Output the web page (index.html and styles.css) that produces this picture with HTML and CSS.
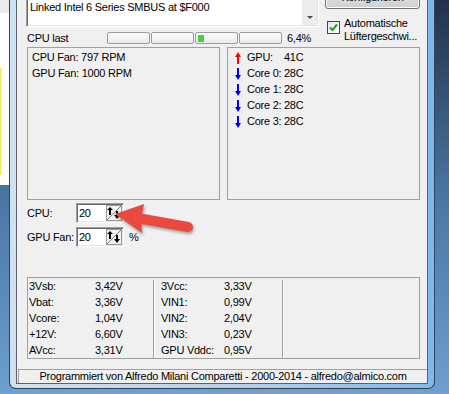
FILE: index.html
```html
<!DOCTYPE html>
<html lang="de">
<head>
    <meta charset="UTF-8">
    <title>SpeedFan</title>
    <link rel="stylesheet" href="styles.css">
</head>
<body>
    <div class="desk">
        <div class="side">
            <div class="side-top"><div class="note-mark"></div></div>
        </div>
        <div class="frame">
            <div class="client">
                <div class="head">
                    <div class="head-main">
                        <div class="memo">
                            <div class="memo-text">Linked Intel 6 Series SMBUS at $F000</div>
                            <div class="memo-scroll"><span class="scroll-arrow"></span></div>
                        </div>
                        <div class="load-row">
                            <span class="load-label">CPU last</span>
                            <div class="load-bars">
                                <div class="bar"></div>
                                <div class="bar"></div>
                                <div class="bar"><div class="bar-fill"></div></div>
                                <div class="bar"></div>
                            </div>
                            <span class="load-value">6,4%</span>
                        </div>
                    </div>
                    <div class="head-side">
                        <button class="btn">Konfigurieren</button>
                        <div class="check">
                            <span class="check-box">
                                <svg width="11" height="11" viewBox="0 0 11 11"><path d="M2 5.5 L4.5 8 L9 2.5" fill="none" stroke="#1f9e1f" stroke-width="2"/></svg>
                            </span>
                            <span class="check-text">Automatische<br>Lüftergeschwi...</span>
                        </div>
                    </div>
                </div>

                <div class="panels">
                    <div class="panel fans">
                        <div>CPU Fan: 797 RPM</div>
                        <div>GPU Fan: 1000 RPM</div>
                    </div>
                    <div class="panel temps">
                        <div class="temp">
                            <svg class="arrow" viewBox="0 0 6 12"><path d="M3 0 L6 5 H4 V12 H2 V5 H0 Z" fill="#f00"/></svg>
                            <span class="temp-name">GPU:</span><span>41C</span>
                        </div>
                        <div class="temp">
                            <svg class="arrow" viewBox="0 0 6 12"><path d="M2 0 H4 V7 H6 L3 12 L0 7 H2 Z" fill="#00f"/></svg>
                            <span class="temp-name">Core 0:</span><span>28C</span>
                        </div>
                        <div class="temp">
                            <svg class="arrow" viewBox="0 0 6 12"><path d="M2 0 H4 V7 H6 L3 12 L0 7 H2 Z" fill="#00f"/></svg>
                            <span class="temp-name">Core 1:</span><span>28C</span>
                        </div>
                        <div class="temp">
                            <svg class="arrow" viewBox="0 0 6 12"><path d="M2 0 H4 V7 H6 L3 12 L0 7 H2 Z" fill="#00f"/></svg>
                            <span class="temp-name">Core 2:</span><span>28C</span>
                        </div>
                        <div class="temp">
                            <svg class="arrow" viewBox="0 0 6 12"><path d="M2 0 H4 V7 H6 L3 12 L0 7 H2 Z" fill="#00f"/></svg>
                            <span class="temp-name">Core 3:</span><span>28C</span>
                        </div>
                    </div>
                </div>

                <div class="speed">
                    <span class="speed-label">CPU:</span>
                    <div class="edit">
                        <span class="edit-value">20</span>
                        <svg class="spin" width="16" height="16" viewBox="0 0 16 16">
                            <rect x="0.5" y="0.5" width="15" height="15" fill="#f0f0f0" stroke="#9a9a9a"/>
                            <path d="M1 15 L15 1" stroke="#7a7a7a"/>
                            <path d="M4 2 L7 5 H5 V10 H3 V5 H1 Z" fill="#000"/>
                            <path d="M10 6 H12 V10 H14 L11 14 L8 10 H10 Z" fill="#000"/>
                        </svg>
                    </div>
                </div>
                <div class="speed">
                    <span class="speed-label">GPU Fan:</span>
                    <div class="edit">
                        <span class="edit-value">20</span>
                        <svg class="spin" width="16" height="16" viewBox="0 0 16 16">
                            <rect x="0.5" y="0.5" width="15" height="15" fill="#f0f0f0" stroke="#9a9a9a"/>
                            <path d="M1 15 L15 1" stroke="#7a7a7a"/>
                            <path d="M4 2 L7 5 H5 V10 H3 V5 H1 Z" fill="#000"/>
                            <path d="M10 6 H12 V10 H14 L11 14 L8 10 H10 Z" fill="#000"/>
                        </svg>
                    </div>
                    <span class="unit">%</span>
                </div>

                <div class="panel volts">
                    <div class="vgroup">
                        <span>3Vsb:</span><span>3,42V</span>
                        <span>Vbat:</span><span>3,36V</span>
                        <span>Vcore:</span><span>1,04V</span>
                        <span>+12V:</span><span>6,60V</span>
                        <span>AVcc:</span><span>3,31V</span>
                    </div>
                    <div class="vsep"></div>
                    <div class="vgroup second">
                        <span>3Vcc:</span><span>3,33V</span>
                        <span>VIN1:</span><span>0,99V</span>
                        <span>VIN2:</span><span>2,04V</span>
                        <span>VIN3:</span><span>0,23V</span>
                        <span>GPU Vddc:</span><span>0,95V</span>
                    </div>
                    <div class="vsep"></div>
                </div>

                <div class="status">Programmiert von Alfredo Milani Comparetti - 2000-2014 - alfredo@almico.com</div>
            </div>
        </div>
    </div>

    <!-- annotation arrow pasted over the screenshot -->
    <svg class="callout" width="100" height="50" viewBox="0 0 100 50">
        <path d="M38 26 L83 34" stroke="#e9493f" stroke-width="10" stroke-linecap="round"/>
        <polygon points="10,21 39,11 36,26 37,40" fill="#e9493f"/>
    </svg>
</body>
</html>
```

FILE: styles.css
```css
body {
    margin: 0;
    font-family: "Liberation Sans", Arial, sans-serif;
    font-size: 11px;
    letter-spacing: -0.25px;
    color: #000;
}

.desk {
    display: flex;
    width: 449px;
    height: 394px;
    overflow: hidden;
    background: linear-gradient(#22324a, #4a76a4 50%, #6d9fd1);
}

.side {
    width: 9px;
    flex: none;
}

.side-top {
    height: 185px;
    padding-top: 68px;
    box-sizing: border-box;
    background: linear-gradient(#ebebeb 0 13px, #fff 13px);
}

.note-mark {
    width: 2px;
    height: 107px;
    background: #f4f072;
}

.frame {
    flex: none;
    width: 426px;
    height: 409px;
    margin-top: -20px;
    box-sizing: border-box;
    border: 1px solid #3a434d;
    border-top: 0;
    border-radius: 0 0 7px 7px;
    padding: 0 6px 4px;
    background: linear-gradient(to right, #d2e1f0, #b0cdea 60%, #7cb8ef);
}

.client {
    height: 100%;
    box-sizing: border-box;
    border: 1px solid #58626c;
    background: #f0f0f0;
    display: flex;
    flex-direction: column;
    padding: 0 7px 0 10px;
}

/* top area */
.head {
    display: flex;
    height: 63px;
    flex: none;
}

.head-main {
    width: 293px;
    margin-left: -1px;
}

.memo {
    height: 46px;
    box-sizing: border-box;
    display: flex;
    padding: 1px;
    border: 1px solid;
    border-color: #a0a0a0 #fff #fff #a0a0a0;
    box-shadow: inset 1px 1px #696969, inset -1px -1px #e3e3e3;
    background: #fff;
}

.memo-text {
    flex: 1;
    padding: 17px 0 0 2px;
    line-height: 15px;
}

.memo-scroll {
    width: 15px;
    display: flex;
    align-items: flex-end;
    justify-content: center;
    background: #ececec;
}

.scroll-arrow {
    border-left: 3px solid transparent;
    border-right: 3px solid transparent;
    border-top: 3px solid #4d4d4d;
    margin-bottom: 6px;
}

.load-row {
    display: flex;
    align-items: center;
    height: 12px;
    margin-top: 5px;
    padding-left: 1px;
}

.load-label {
    width: 80px;
}

.load-bars {
    display: flex;
    gap: 1px;
}

.bar {
    width: 43px;
    height: 12px;
    box-sizing: border-box;
    border: 1px solid #9c9c9c;
    border-radius: 2px;
    padding: 2px 0 1px 2px;
    background: linear-gradient(#fbfbfb, #ececec);
}

.bar-fill {
    width: 6px;
    height: 100%;
    background: #3fd43f;
}

.load-value {
    margin-left: 5px;
}

.head-side {
    width: 95px;
    margin-left: 6px;
    display: flex;
    flex-direction: column;
}

.btn {
    width: 95px;
    height: 25px;
    margin-top: 3px;
    padding: 0;
    font: inherit;
    letter-spacing: inherit;
    color: #000;
    border: 1px solid #707070;
    border-radius: 3px;
    background: linear-gradient(#f2f2f2, #ebebeb 50%, #dddddd 50%, #cfcfcf);
    box-shadow: inset 0 0 0 1px #fcfcfc;
}

.check {
    display: flex;
    margin-top: 8px;
    line-height: 13px;
}

.check-box {
    width: 13px;
    height: 13px;
    flex: none;
    box-sizing: border-box;
    margin: 4px 4px 0 2px;
    border: 1px solid #1f4d78;
    background: linear-gradient(135deg, #dfe6ee, #fff);
}

.check-box svg {
    display: block;
}

/* fan and temperature panels */
.panels {
    display: flex;
    gap: 7px;
    height: 153px;
    margin-top: 3px;
    flex: none;
}

.panel {
    border: 1px solid #a0a0a0;
    box-sizing: border-box;
}

.fans,
.temps {
    width: 193px;
    padding-top: 1px;
    line-height: 16px;
}

.fans {
    padding-left: 4px;
}

.temps {
    padding-left: 7px;
}

.temp {
    display: flex;
    align-items: center;
    height: 16px;
    white-space: nowrap;
}

.arrow {
    width: 6px;
    height: 12px;
    flex: none;
    margin: 1px 6px 0 0;
}

.temp-name {
    width: 37px;
    flex: none;
}

/* speed inputs */
.speed {
    display: flex;
    align-items: center;
    height: 20px;
    margin-top: 3px;
    flex: none;
    white-space: nowrap;
}

.speed + .speed {
    margin-top: 4px;
}

.speed-label {
    width: 49px;
    flex: none;
}

.edit {
    display: flex;
    width: 48px;
    height: 20px;
    flex: none;
    box-sizing: border-box;
    padding: 1px;
    border: 1px solid;
    border-color: #a0a0a0 #fff #fff #a0a0a0;
    box-shadow: inset 1px 1px #696969, inset -1px -1px #e3e3e3;
    background: #fff;
}

.edit-value {
    flex: 1;
    padding-left: 1px;
    line-height: 16px;
}

.spin {
    display: block;
}

.unit {
    margin-left: 5px;
}

/* voltages */
.volts {
    display: flex;
    height: 82px;
    margin-top: 30px;
    flex: none;
}

.vgroup {
    display: grid;
    grid-template-columns: 66px 58px;
    grid-auto-rows: 16px;
    line-height: 16px;
    padding-left: 1px;
    white-space: nowrap;
}

.vgroup.second {
    grid-template-columns: 63px 58px;
    padding-left: 7px;
}

.vsep {
    width: 1px;
    margin-top: 2px;
    background: #a0a0a0;
    box-shadow: 1px 0 #fff;
}

.status {
    height: 14px;
    margin: 10px -7px 0 -9px;
    box-sizing: border-box;
    border-top: 1px solid #a0a0a0;
    border-left: 1px solid #a0a0a0;
    text-align: center;
    line-height: 13px;
    flex: none;
}

.callout {
    position: absolute;
    left: 105px;
    top: 193px;
    filter: drop-shadow(1px 2px 1.5px rgba(0, 0, 0, 0.35));
}
```
